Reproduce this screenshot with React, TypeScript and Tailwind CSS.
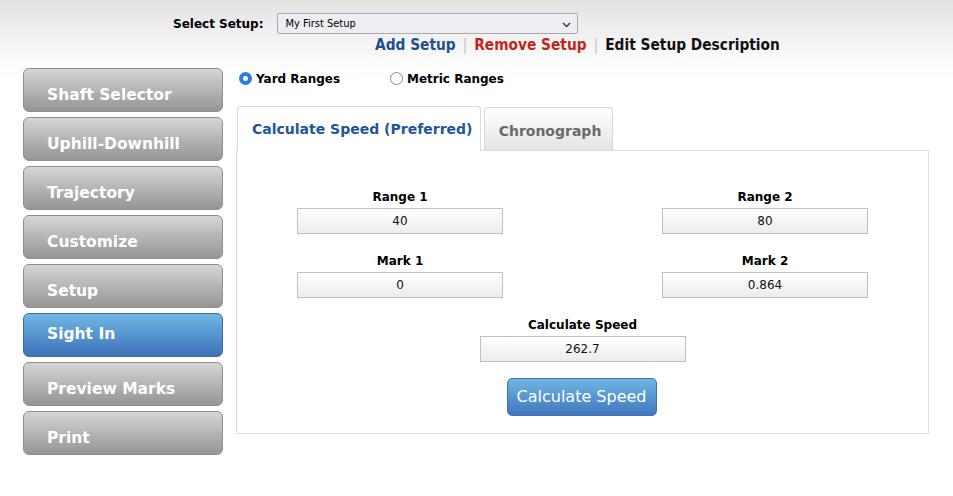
import type { ReactNode } from "react";

const navItems = [
  "Shaft Selector",
  "Uphill-Downhill",
  "Trajectory",
  "Customize",
  "Setup",
  "Sight In",
  "Preview Marks",
  "Print",
];

function Field({ label, value }: { label: string; value: string }) {
  return (
    <div className="flex w-[206px] flex-col items-center">
      <div className="h-[15px] text-[12px] font-bold leading-[15px] text-black">{label}</div>
      <div className="mt-[3px] flex h-[26px] w-[206px] items-center justify-center border border-[#bcc0c4] bg-gradient-to-b from-white to-[#ececec] text-[12px] text-[#111]">
        {value}
      </div>
    </div>
  );
}

function Radio({ checked, children }: { checked?: boolean; children: ReactNode }) {
  return (
    <div className="flex items-center gap-[4px]">
      {checked ? (
        <span className="flex h-[13px] w-[13px] items-center justify-center rounded-full bg-[#2a7be6]">
          <span className="h-[5px] w-[5px] rounded-full bg-white" />
        </span>
      ) : (
        <span className="h-[13px] w-[13px] rounded-full border border-[#8a8a8a] bg-white" />
      )}
      <span className="text-[12px] font-bold text-black">{children}</span>
    </div>
  );
}

export default function App() {
  return (
    <div
      className="h-[496px] w-[953px] overflow-hidden bg-[linear-gradient(to_bottom,#e2e2e2,#fbfbfb_60px,#ffffff_80px)]"
      style={{ fontFamily: '"DejaVu Sans", Verdana, sans-serif' }}
    >
      {/* Header */}
      <div className="pt-[13px]">
        <div className="flex items-center">
          <span className="ml-[173px] text-[12px] font-bold text-black">Select Setup:</span>
          <div className="ml-[13px] flex h-[21px] w-[301px] items-center justify-between rounded-[2px] border border-[#a9abb0] bg-[#eeeef2] pl-[8px] pr-[6px] pt-[2px]">
            <span className="text-[11px] text-black" style={{ fontFamily: '"DejaVu Sans Condensed", sans-serif' }}>
              My First Setup
            </span>
            <svg width="9" height="6" viewBox="0 0 9 6" fill="none">
              <path d="M1 1l3.5 3.5L8 1" stroke="#333" strokeWidth="1.3" />
            </svg>
          </div>
        </div>
        <div
          className="ml-[375px] mt-[3px] flex h-[16px] items-center gap-[7px] text-[15.3px] font-bold leading-[16px]"
          style={{ fontFamily: '"DejaVu Sans Condensed", "DejaVu Sans", sans-serif' }}
        >
          <span className="text-[#1f4f8f]">Add Setup</span>
          <span className="font-normal text-[#c4c4c4]">|</span>
          <span className="text-[#c2261b]">Remove Setup</span>
          <span className="font-normal text-[#c4c4c4]">|</span>
          <span className="text-[#111]">Edit Setup Description</span>
        </div>
      </div>

      {/* Body */}
      <div className="mt-[15px] flex">
        {/* Sidebar */}
        <div className="ml-[23px] flex w-[200px] flex-col gap-[5px]">
          {navItems.map((item) => {
            const active = item === "Sight In";
            return (
              <div
                key={item}
                className={
                  active
                    ? "flex h-[44px] items-center rounded-[6px] border border-[#3b6cae] bg-gradient-to-b from-[#6fb8e4] to-[#3f72b9] pl-[23px] text-[15.5px] font-bold text-white"
                    : "flex h-[44px] items-end rounded-[6px] border border-[#8f8f8f] bg-gradient-to-b from-[#d6d6d6] to-[#959595] pb-[4px] pl-[23px] text-[15.5px] font-bold text-white"
                }
              >
                {item}
              </div>
            );
          })}
        </div>

        {/* Main */}
        <div className="ml-[13px] flex w-[693px] flex-col">
          <div className="flex h-[20px] items-center pl-[3px] pt-[1px]">
            <div className="w-[151px]">
              <Radio checked>Yard Ranges</Radio>
            </div>
            <Radio>Metric Ranges</Radio>
          </div>

          {/* Tabs */}
          <div className="relative z-10 mt-[18px] flex items-end gap-[3px] pl-[1px]">
            <div className="flex h-[45px] w-[244px] items-center rounded-t-[4px] border border-b-0 border-[#dcdcdc] bg-white pl-[14px] text-[14px] font-bold text-[#22559a]">
              Calculate Speed (Preferred)
            </div>
            <div className="mb-px flex h-[43px] w-[129px] items-center justify-center rounded-t-[4px] border border-b-0 border-[#d6d6d6] bg-gradient-to-b from-white to-[#e4e4e4] pl-[3px] pt-[4px] text-[14px] font-bold text-[#6a6a6a]">
              Chronograph
            </div>
          </div>

          {/* Panel */}
          <div className="-mt-px flex h-[284px] flex-col border border-[#dcdcdc] bg-white px-[60px] pt-[39px]">
            <div className="flex justify-between">
              <Field label="Range 1" value="40" />
              <Field label="Range 2" value="80" />
            </div>
            <div className="mt-[20px] flex justify-between">
              <Field label="Mark 1" value="0" />
              <Field label="Mark 2" value="0.864" />
            </div>
            <div className="mt-[20px] flex flex-col items-center">
              <Field label="Calculate Speed" value="262.7" />
              <div className="mt-[16px] mr-[2px] flex h-[38px] w-[150px] items-center justify-center rounded-[5px] border border-[#3f70b0] bg-gradient-to-b from-[#70b6e2] to-[#4276bd] text-[16px] text-white">
                Calculate Speed
              </div>
            </div>
          </div>
        </div>
      </div>
    </div>
  );
}
